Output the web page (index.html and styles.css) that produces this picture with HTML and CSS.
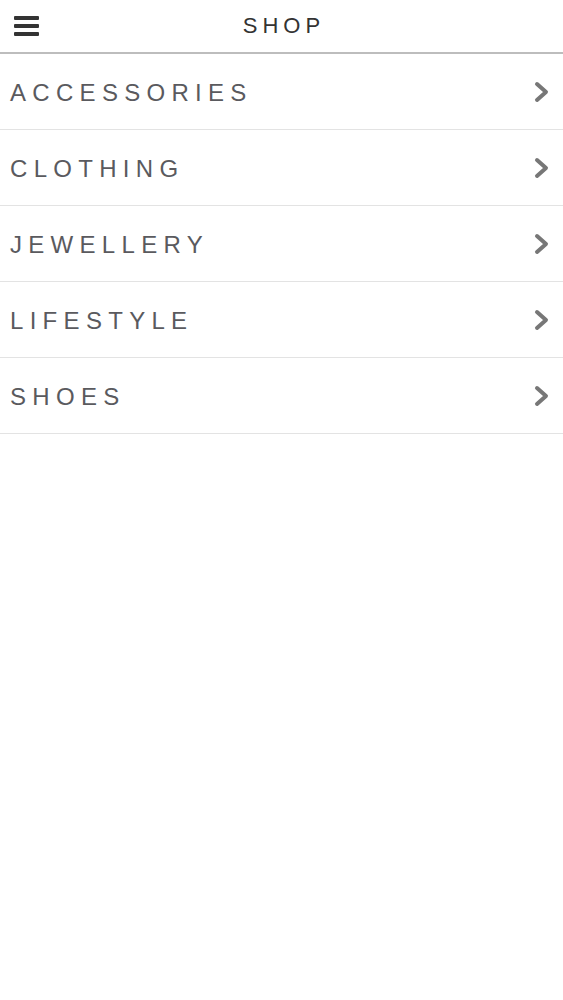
FILE: index.html
```html
<!DOCTYPE html>
<html lang="en">
<head>
    <meta charset="UTF-8">
    <meta name="viewport" content="width=device-width, initial-scale=1.0">
    <title>Shop</title>
    <link rel="stylesheet" href="styles.css">
</head>
<body>
    <header class="topbar">
        <div class="menu-icon">
            <span></span>
            <span></span>
            <span></span>
        </div>
        <h1>SHOP</h1>
    </header>
    <ul class="categories">
        <li>
            <span class="label">ACCESSORIES</span>
            <svg class="chevron" viewBox="0 0 16 22" width="16" height="22"><polyline points="3,3 12,11 3,19" /></svg>
        </li>
        <li>
            <span class="label">CLOTHING</span>
            <svg class="chevron" viewBox="0 0 16 22" width="16" height="22"><polyline points="3,3 12,11 3,19" /></svg>
        </li>
        <li>
            <span class="label">JEWELLERY</span>
            <svg class="chevron" viewBox="0 0 16 22" width="16" height="22"><polyline points="3,3 12,11 3,19" /></svg>
        </li>
        <li>
            <span class="label">LIFESTYLE</span>
            <svg class="chevron" viewBox="0 0 16 22" width="16" height="22"><polyline points="3,3 12,11 3,19" /></svg>
        </li>
        <li>
            <span class="label">SHOES</span>
            <svg class="chevron" viewBox="0 0 16 22" width="16" height="22"><polyline points="3,3 12,11 3,19" /></svg>
        </li>
    </ul>
</body>
</html>
```

FILE: styles.css
```css
body {
    font-family: "Liberation Sans", Arial, sans-serif;
    margin: 0;
    padding: 0;
    background-color: #ffffff;
}
.topbar {
    position: relative;
    height: 52px;
    border-bottom: 2px solid #bdbdbd;
    display: flex;
    align-items: center;
    justify-content: center;
}
.topbar h1 {
    margin: 0 0 0 5px;
    font-size: 22px;
    font-weight: normal;
    letter-spacing: 5px;
    color: #333333;
}
.menu-icon {
    position: absolute;
    left: 14px;
    top: 16px;
    width: 25px;
    display: flex;
    flex-direction: column;
    gap: 4px;
}
.menu-icon span {
    display: block;
    height: 4px;
    border-radius: 1px;
    background-color: #333333;
}
.categories {
    list-style: none;
    margin: 0;
    padding: 0;
}
.categories li {
    height: 75px;
    border-bottom: 1px solid #e3e3e3;
    display: flex;
    align-items: center;
    justify-content: space-between;
    padding: 0 13px 0 10px;
}
.label {
    font-size: 24px;
    letter-spacing: 6.3px;
    color: #5a5a5e;
    padding-top: 2px;
}
.chevron polyline {
    fill: none;
    stroke: #777777;
    stroke-width: 4;
    stroke-linecap: round;
    stroke-linejoin: round;
}
```
